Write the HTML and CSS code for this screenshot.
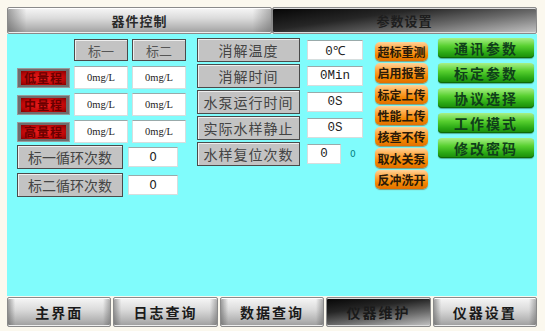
FILE: index.html
```html
<!DOCTYPE html>
<html lang="zh">
<head>
<meta charset="utf-8">
<title>参数设置</title>
<link rel="stylesheet" href="styles.css">
</head>
<body>
<div class="screen">
  <div class="tabs top">
    <div class="tab light">器件控制</div>
    <div class="tab dark">参数设置</div>
  </div>
  <div class="panel">
    <div class="col-left">
      <div class="row head">
        <div class="spacer"></div>
        <div class="cell gray">标一</div>
        <div class="cell gray">标二</div>
      </div>
      <div class="row">
        <div class="redbtn"><span>低量程</span></div>
        <div class="cell white">0mg/L</div>
        <div class="cell white">0mg/L</div>
      </div>
      <div class="row">
        <div class="redbtn"><span>中量程</span></div>
        <div class="cell white">0mg/L</div>
        <div class="cell white">0mg/L</div>
      </div>
      <div class="row">
        <div class="redbtn"><span>高量程</span></div>
        <div class="cell white">0mg/L</div>
        <div class="cell white">0mg/L</div>
      </div>
      <div class="row cnt first">
        <div class="label wide">标一循环次数</div>
        <div class="val small">0</div>
      </div>
      <div class="row cnt">
        <div class="label wide">标二循环次数</div>
        <div class="val small">0</div>
      </div>
    </div>
    <div class="col-mid">
      <div class="mrow"><div class="label mid">消解温度</div><div class="val mv">0℃</div></div>
      <div class="mrow"><div class="label mid">消解时间</div><div class="val mv">0Min</div></div>
      <div class="mrow"><div class="label mid">水泵运行时间</div><div class="val mv">0S</div></div>
      <div class="mrow"><div class="label mid">实际水样静止</div><div class="val mv">0S</div></div>
      <div class="mrow"><div class="label mid">水样复位次数</div><div class="val mv short">0</div><span class="tiny">0</span></div>
    </div>
    <div class="col-orange">
      <div class="obtn">超标重测</div>
      <div class="obtn">启用报警</div>
      <div class="obtn">标定上传</div>
      <div class="obtn">性能上传</div>
      <div class="obtn">核查不传</div>
      <div class="obtn">取水关泵</div>
      <div class="obtn">反冲洗开</div>
    </div>
    <div class="col-green">
      <div class="gbtn">通讯参数</div>
      <div class="gbtn">标定参数</div>
      <div class="gbtn">协议选择</div>
      <div class="gbtn">工作模式</div>
      <div class="gbtn">修改密码</div>
    </div>
  </div>
  <div class="tabs bottom">
    <div class="tab light">主界面</div>
    <div class="tab light">日志查询</div>
    <div class="tab light">数据查询</div>
    <div class="tab dark">仪器维护</div>
    <div class="tab light">仪器设置</div>
  </div>
</div>
</body>
</html>
```

FILE: styles.css
```css
* { box-sizing: border-box; }
html, body { margin: 0; padding: 0; }
body {
  width: 545px;
  height: 331px;
  background: #fbf8ee;
  font-family: "Noto Sans CJK SC", "Noto Sans", sans-serif;
  overflow: hidden;
}
.screen {
  padding: 7px 8px 0 7px;
  display: flex;
  flex-direction: column;
}
.tabs { display: flex; }
.tabs.top { height: 27px; }
.tabs.bottom { height: 30px; margin-top: 1px; gap: 2px; }
.tab {
  flex: 1;
  display: flex;
  align-items: center;
  justify-content: center;
  font-weight: bold;
  font-size: 13px;
  letter-spacing: 1px;
  color: #2a2a2a;
  border: 1px solid #8a8a8a;
  border-radius: 2px;
}
.tabs.bottom .tab { font-size: 14px; letter-spacing: 2px; color: #1a1a1a; }
.tab.light {
  background:
    linear-gradient(90deg, rgba(90,90,90,.55) 0, rgba(90,90,90,0) 7%, rgba(0,0,0,0) 93%, rgba(90,90,90,.45) 100%),
    linear-gradient(180deg, #f6f6f6 0%, #dcdcdc 40%, #b4b4b4 80%, #9c9c9c 100%);
  box-shadow: inset 0 1px 0 #fff, inset 0 -1px 0 #eee;
}
.tab.dark {
  background:
    linear-gradient(172deg, #050505 0%, #262626 35%, #6a6a6a 65%, #c4c4c4 100%);
  box-shadow: inset 0 1px 0 #ddd, inset 0 -1px 0 #ddd;
  color: #1e1e1e;
}
.panel {
  height: 262px;
  background: #80fcfc;
  display: flex;
  align-items: flex-start;
  padding-left: 10px;
}

/* left column */
.col-left {
  width: 170px;
  margin-top: 5px;
  display: flex;
  flex-direction: column;
}
.row { display: flex; align-items: center; gap: 4px; height: 23px; margin-bottom: 4px; }
.row.head { height: 22px; margin-bottom: 5px; }
.spacer { width: 53px; }
.cell {
  width: 54px;
  height: 100%;
  display: flex;
  align-items: center;
  justify-content: center;
}
.cell.gray {
  background: #c3c3c3;
  border: 1px solid #4a4a4a;
  box-shadow: inset 1px 1px 0 #eee;
  font-size: 13px;
  color: #555;
}
.cell.white {
  background: #fff;
  border: 1px solid #d6dede;
  border-top-color: #9aa;
  font-family: "Liberation Serif", serif;
  font-size: 10.5px;
  color: #222;
}
.redbtn {
  width: 53px;
  height: 20px;
  background: #6d6d6d;
  border: 1px solid #999;
  padding: 2px 3px;
}
.redbtn span {
  display: flex;
  align-items: center;
  justify-content: center;
  height: 100%;
  background: radial-gradient(ellipse at 50% 50%, #f02020 0%, #c80a0a 60%, #8a0000 100%);
  color: #6a0000;
  font-size: 12px;
  font-weight: bold;
  letter-spacing: 1px;
  line-height: 1;
}
.row.cnt { height: 24px; gap: 5px; margin-bottom: 4px; }
.row.cnt.first { margin-top: -2px; }
.label {
  background: #c3c3c3;
  border: 1px solid #4a4a4a;
  box-shadow: inset 1px 1px 0 #eee;
  display: flex;
  align-items: center;
  justify-content: center;
  color: #444;
  height: 100%;
}
.label.wide { width: 106px; font-size: 14px; letter-spacing: 0; }
.val {
  background: #fff;
  border: 1px solid #d6dede;
  border-top-color: #9aa;
  display: flex;
  align-items: center;
  justify-content: center;
  font-family: "DejaVu Sans", sans-serif;
  font-size: 12px;
  color: #222;
}
.val.small { width: 50px; height: 20px; }

/* middle column */
.col-mid {
  margin-left: 10px;
  margin-top: 4px;
  display: flex;
  flex-direction: column;
  gap: 2px;
}
.mrow { display: flex; align-items: center; height: 24px; }
.label.mid { width: 103px; font-size: 14px; letter-spacing: 1px; }
.val.mv {
  width: 56px;
  height: 20px;
  margin-left: 7px;
  font-family: "Liberation Mono", monospace;
  font-size: 12.5px;
}
.val.mv.short { width: 34px; }
.tiny {
  margin-left: 9px;
  font-family: "DejaVu Sans", sans-serif;
  font-size: 9px;
  color: #008080;
}

/* orange column */
.col-orange {
  margin-left: 12px;
  margin-top: 8px;
  display: flex;
  flex-direction: column;
  gap: 2px;
}
.obtn {
  width: 53px;
  height: 19.3px;
  border-radius: 5px;
  background: linear-gradient(180deg, #ffd49a 0%, #ffa640 35%, #f28600 70%, #e27000 100%);
  box-shadow: 0 1px 1px rgba(120,60,0,.5);
  display: flex;
  align-items: center;
  justify-content: center;
  font-size: 12px;
  font-weight: bold;
  color: #2a1a08;
  letter-spacing: 0;
}

/* green column */
.col-green {
  margin-left: 10px;
  margin-top: 4px;
  display: flex;
  flex-direction: column;
  gap: 5px;
}
.gbtn {
  width: 96px;
  height: 20px;
  border-radius: 4px;
  background: linear-gradient(180deg, #a8f088 0%, #58d030 40%, #2aa814 75%, #1a8a0a 100%);
  box-shadow: inset 0 -1px 0 #0e6a06, 0 1px 1px rgba(0,60,0,.4);
  display: flex;
  align-items: center;
  justify-content: center;
  font-size: 14px;
  font-weight: bold;
  letter-spacing: 2px;
  color: #10401a;
}
```
